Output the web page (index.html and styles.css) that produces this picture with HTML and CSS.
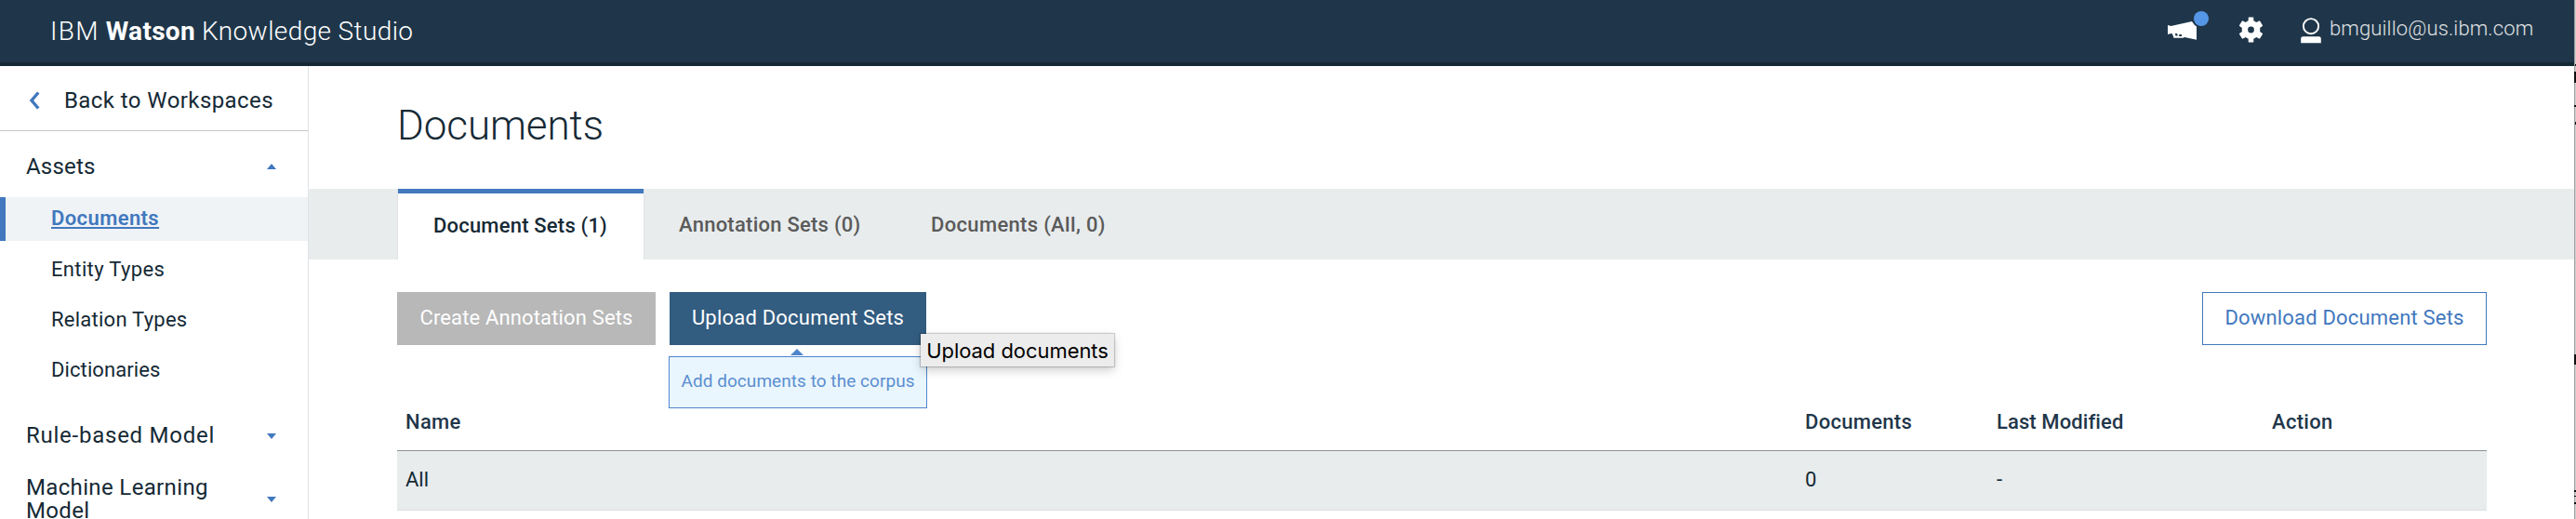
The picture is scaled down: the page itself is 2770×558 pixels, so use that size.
FILE: index.html
```html
<!DOCTYPE html>
<html lang="en">
<head>
<meta charset="utf-8">
<title>IBM Watson Knowledge Studio</title>
<link rel="stylesheet" href="styles.css">
</head>
<body>
<div class="window">
  <div class="app">
    <header class="header">
      <div class="brand"><span class="brand-ibm">IBM</span><b class="brand-watson">Watson</b><span class="brand-knowledge">Knowledge</span><span>Studio</span></div>
      <div class="tools">
        <svg class="icon-announce" width="46" height="34" viewBox="0 0 46 34">
          <path d="M1 15l3.500 1L27 11l5 5v14.700l-13-2.700-1.500.8H7.500L6 24.500 4.500 24 1 25z" fill="#fff"/>
          <path d="M8.800 24h2.200l.8 2.400H9.500z M13.200 25h2.800v2h-2.800z" fill="#1f364a"/>
          <circle cx="37" cy="8" r="10" fill="#1f364a"/>
          <circle cx="37" cy="8" r="8" fill="#5596e6"/>
        </svg>
        <svg class="icon-gear" width="27" height="28" viewBox="0 0 27 28">
          <path d="M10.700 1.200Q10.700.5 11.400.5H15.600Q16.300.5 16.300 1.200V4.300Q17.900 4.900 19.200 6L22.200 4.400Q22.800 4.100 23.200 4.700L26 9.300Q26.200 9.900 25.600 10.300L23.100 11.900Q23.500 14 23.100 16.100L25.600 17.700Q26.200 18.100 26 18.700L23.200 23.300Q22.800 23.900 22.200 23.600L19.200 22Q17.900 23.100 16.300 23.700V26.800Q16.300 27.500 15.600 27.500H11.400Q10.700 27.500 10.700 26.800V23.700Q9.100 23.100 7.800 22L4.800 23.600Q4.200 23.900 3.800 23.300L1 18.700Q.8 18.100 1.400 17.700L3.900 16.100Q3.500 14 3.900 11.900L1.400 10.300Q.8 9.900 1 9.300L3.800 4.700Q4.200 4.100 4.800 4.400L7.800 6Q9.100 4.900 10.700 4.300Z" fill="#fff"/>
          <circle cx="13.500" cy="14" r="3.400" fill="#1f364a"/>
        </svg>
        <svg class="icon-user" width="22" height="28" viewBox="0 0 22 28">
          <circle cx="11" cy="9.200" r="8.100" fill="none" stroke="#fff" stroke-width="1.900"/>
          <path d="M.2 27.200v-4.700q0-2.300 2.300-2.300h17q2.300 0 2.300 2.300v4.700z" fill="#fff"/>
        </svg>
        <span class="email">bmguillo@us.ibm.com</span>
      </div>
    </header>
    <div class="body">
      <nav class="sidebar">
        <a class="back">
          <svg width="12" height="20" viewBox="0 0 12 20"><path d="M10.200 1.500L3 10l7.200 8.500" fill="none" stroke="#4178be" stroke-width="3.400"/></svg>
          <span>Back to Workspaces</span>
        </a>
        <div class="group group-assets"><span>Assets</span><i class="caret caret-up"></i></div>
        <ul class="items">
          <li class="item item-active"><a>Documents</a></li>
          <li class="item item-entity">Entity Types</li>
          <li class="item item-relation">Relation Types</li>
          <li class="item item-dict">Dictionaries</li>
        </ul>
        <div class="group group-rule"><span>Rule-based Model</span><i class="caret"></i></div>
        <div class="group group-ml"><span>Machine Learning<br>Model</span><i class="caret"></i></div>
      </nav>
      <main class="main">
        <h1 class="title">Documents</h1>
        <div class="tabs">
          <div class="tab tab-active">Document Sets (1)</div>
          <div class="tab tab-annotation">Annotation Sets (0)</div>
          <div class="tab tab-all">Documents (All, 0)</div>
        </div>
        <div class="actions">
          <div class="button button-disabled">Create Annotation Sets</div>
          <div class="upload">
            <div class="button button-primary">Upload Document Sets</div>
            <div class="hint">Add documents to the corpus</div>
            <div class="tooltip">Upload documents</div>
          </div>
          <div class="button button-outline">Download Document Sets</div>
        </div>
        <div class="table">
          <div class="row row-head"><span>Name</span><span>Documents</span><span class="modified">Last Modified</span><span>Action</span></div>
          <div class="row row-data"><span>All</span><span>0</span><span>-</span><span></span></div>
        </div>
      </main>
    </div>
  </div>
  <svg class="edge" width="2" height="558" viewBox="0 0 2 558">
    <path d="M0 0h1v558h-1z" fill="#a0a0a0"/>
    <path d="M1 0h1v558h-1z" fill="#cfcfcf"/>
    <path d="M1 69h1v2h-1z M0 77h2v12h-2z M0 113h2v2h-2z M1 131h1v3h-1z M0 381h2v11h-2z M0 527h2v2h-2z M0 533h2v1h-2z M0 540h2v2h-2z" fill="#111"/>
  </svg>
</div>
</body>
</html>
```
FILE: styles.css
```css
* { box-sizing: border-box; }
body { margin: 0; font-family: Roboto, "Liberation Sans", sans-serif; font-size: 22px; color: #152935; background: #fff; }
.window { display: flex; width: 2770px; height: 558px; overflow: hidden; }
.app { flex: 1; display: flex; flex-direction: column; }
.edge { display: block; flex: none; }

.header { height: 72px; background: #1f364a; border-bottom: 4px solid #152935; display: flex; justify-content: space-between; padding-left: 54px; padding-right: 42px; }
.brand { font-size: 28px; font-weight: 300; line-height: 67px; color: #fff; letter-spacing: .4px; white-space: nowrap; }
.brand-ibm { letter-spacing: 1.3px; margin-right: 7px; }
.brand-watson { font-weight: 700; letter-spacing: .3px; margin-right: 7px; }
.brand-knowledge { margin-right: 7px; }
.tools { display: flex; align-items: flex-start; }
.icon-announce { margin: 12px 31px 0 0; }
.icon-gear { margin: 18px 40px 0 0; }
.icon-user { margin: 18.500px 9px 0 0; }
.email { line-height: 61px; color: #e0e2e4; font-weight: 300; letter-spacing: .13px; width: 221px; white-space: nowrap; }

.body { flex: 1; display: flex; }
.sidebar { width: 332px; border-right: 1px solid #dfe3e6; }
.back { display: flex; align-items: center; gap: 26px; height: 70px; padding: 4px 0 0 31px; border-bottom: 1px solid #c7c7c7; font-size: 24px; letter-spacing: .42px; line-height: 28px; }
.group { display: flex; align-items: center; justify-content: space-between; padding: 0 34px 0 28px; font-size: 24px; line-height: 25px; letter-spacing: .35px; }
.group-assets { height: 71px; padding-top: 5px; letter-spacing: .2px; }
.group-rule { height: 71px; padding-top: 2px; letter-spacing: .75px; }
.group-ml { height: 67px; }
.caret { width: 0; height: 0; border: 5.500px solid transparent; border-top: 6px solid #4178be; border-bottom: 0; }
.caret-up { border-top: 0; border-bottom: 6px solid #4178be; }
.items { list-style: none; margin: 0; padding: 0; height: 220px; }
.item { height: 54px; line-height: 55px; padding-left: 55px; letter-spacing: .25px; }
.item-active { height: 47px; line-height: 46px; margin-bottom: 3px; background: #eff3f6; border-left: 6px solid #4178be; padding-left: 49px; color: #4178be; font-weight: 600; letter-spacing: .4px; }
.item-active a { text-decoration: underline; text-decoration-thickness: 2px; text-underline-offset: 2px; }
.item-entity { letter-spacing: .35px; }
.item-dict { letter-spacing: .1px; }

.main { flex: 1; }
.title { margin: 0; height: 132px; padding-left: 95px; font-size: 44px; font-weight: 300; line-height: 129px; letter-spacing: -.1px; }
.tabs { display: flex; height: 76px; padding-left: 95px; background: #e8eced; border-radius: 2px 2px 0 0; font-weight: 500; line-height: 77px; white-space: nowrap; }
.tab { color: #5a5a5a; }
.tab-active { width: 266px; padding-left: 38px; background: #fff; color: #152935; border-left: 1px solid #dfe3e6; border-right: 1px solid #dfe3e6; box-shadow: inset 0 5px #4178be; line-height: 80px; letter-spacing: .2px; }
.tab-annotation { width: 271px; padding-left: 37px; letter-spacing: .25px; }
.tab-all { padding-left: 37px; letter-spacing: .33px; }
.actions { display: flex; gap: 15px; padding: 35px 94px 0 95px; height: 143px; }
.button { height: 57px; line-height: 56px; text-align: center; color: #fff; white-space: nowrap; }
.button-disabled { width: 278px; background: #b8b8b8; letter-spacing: .15px; }
.upload { position: relative; }
.button-primary { width: 276px; background: #325c80; letter-spacing: .21px; }
.button-outline { width: 306px; line-height: 54px; margin-left: auto; border: 1px solid #4178be; color: #4178be; letter-spacing: .19px; }
.hint { position: absolute; left: -1px; top: 69px; width: 278px; height: 56px; line-height: 51px; border: 1px solid #4f85cc; background: #eaf6fd; color: #5a8ed0; font-size: 19px; letter-spacing: .05px; text-align: center; white-space: nowrap; }
.hint::before { content: ""; position: absolute; left: 130px; top: -9px; border: 7px solid transparent; border-bottom: 7px solid #4f85cc; border-top: 0; }
.tooltip { position: absolute; left: 270px; top: 45px; width: 208px; height: 35px; line-height: 36px; background: #ececec; color: #000; font-family: Inter, sans-serif; letter-spacing: -.05px; text-align: center; white-space: nowrap; box-shadow: 0 0 1px 1px rgba(0,0,0,.18), 0 4px 10px rgba(0,0,0,.2); }

.table { margin: 0 94px 0 95px; }
.row { display: grid; grid-template-columns: 1505px 206px 296px 1fr; padding-left: 9px; }
.row-head { height: 63px; line-height: 64px; border-bottom: 1px solid #8c9296; color: #1f364a; font-weight: 500; letter-spacing: .3px; }
.modified { letter-spacing: .1px; }
.row-data { height: 64px; line-height: 62px; background: #e8eced; border-bottom: 1px solid #dcdfe0; }
```
